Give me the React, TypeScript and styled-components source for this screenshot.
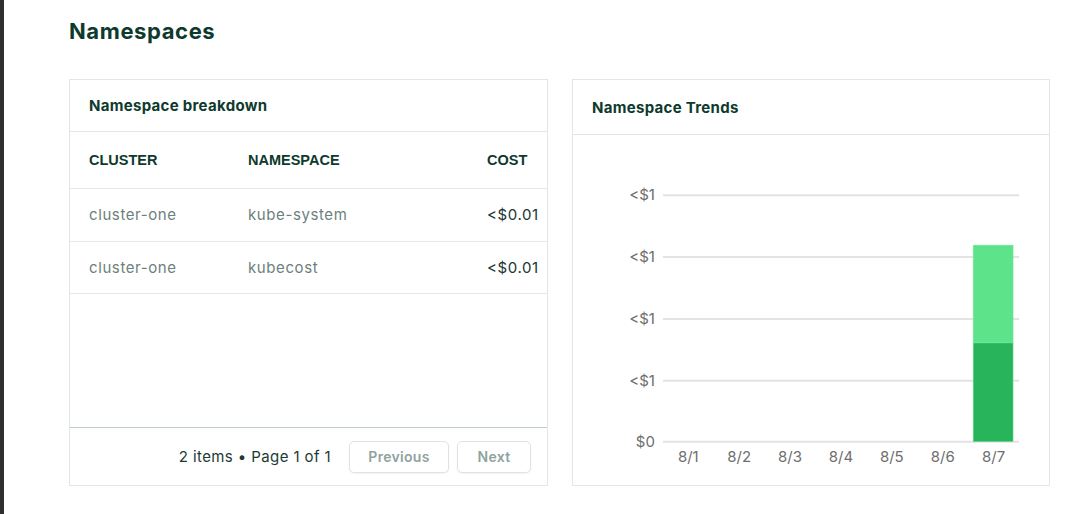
import React from "react";
import styled, { createGlobalStyle } from "styled-components";

const Global = createGlobalStyle`
  html, body { margin: 0; padding: 0; background: #ffffff; }
  body { font-family: Inter, "Open Sans", sans-serif; color: #0f3b30; }
  * { box-sizing: border-box; }
`;

const Page = styled.div`
  display: flex;
  min-height: 514px;
`;

const SideEdge = styled.div`
  width: 4px;
  flex: none;
  background: #2f2f2f;
`;

const Main = styled.main`
  flex: 1;
  padding: 16px 15px 0 65px;
`;

const Title = styled.h1`
  margin: 0 0 33px;
  font-size: 22px;
  line-height: 30px;
  font-weight: 700;
  letter-spacing: 0.6px;
  color: #0e3a2e;
`;

const Grid = styled.div`
  display: grid;
  grid-template-columns: 479px 478px;
  gap: 24px;
`;

const Card = styled.section`
  height: 407px;
  border: 1px solid #e4e6e6;
  background: #fff;
  display: flex;
  flex-direction: column;
  overflow: hidden;
`;

const CardHeader = styled.div<{ $h: number }>`
  height: ${(p) => p.$h}px;
  flex: none;
  display: flex;
  align-items: center;
  padding: 0 19px;
  border-bottom: 1px solid #e4e6e6;
  font-size: 15px;
  font-weight: 700;
  letter-spacing: 0.3px;
  color: #0e3a2e;
`;

const Table = styled.div`
  flex: 1;
  display: flex;
  flex-direction: column;
`;

const Row = styled.div<{ $head?: boolean }>`
  display: grid;
  grid-template-columns: 159px 239px 1fr;
  align-items: center;
  height: ${(p) => (p.$head ? 57 : 52.5)}px;
  flex: none;
  padding-left: 19px;
  border-bottom: 1px solid #e6e8e8;
`;

const HeadCell = styled.div`
  font-family: "Liberation Sans", Arial, sans-serif;
  font-weight: 700;
  font-size: 14.5px;
  color: #0e3a2e;
`;

const Cell = styled.div<{ $dark?: boolean }>`
  font-size: 15px;
  letter-spacing: 0.6px;
  color: ${(p) => (p.$dark ? "#1b3530" : "#6d7f7c")};
  white-space: nowrap;
`;

const Spacer = styled.div`
  flex: 1;
`;

const Footer = styled.div`
  height: 58px;
  flex: none;
  border-top: 1px solid #bccfcb;
  display: flex;
  align-items: center;
  justify-content: flex-end;
  padding: 0 16px 0 20px;
  gap: 8px;
`;

const PageInfo = styled.span`
  font-size: 15px;
  letter-spacing: 0.4px;
  color: #1b3a33;
  margin-right: 10px;
`;

const PagerButton = styled.button<{ $w: number }>`
  width: ${(p) => p.$w}px;
  height: 32px;
  border: 1px solid #dfe4e3;
  border-radius: 5px;
  background: #fff;
  box-shadow: 0 1px 2px rgba(0, 0, 0, 0.05);
  font-family: Inter, sans-serif;
  font-size: 14px;
  font-weight: 600;
  letter-spacing: 0.3px;
  color: #8fa39f;
  cursor: default;
`;

const ChartBody = styled.div`
  flex: 1;
  display: flex;
`;

const rows = [
  { cluster: "cluster-one", ns: "kube-system", cost: "<$0.01" },
  { cluster: "cluster-one", ns: "kubecost", cost: "<$0.01" },
];

const gridY = [60, 122, 184, 246, 307];
const yLabels = ["<$1", "<$1", "<$1", "<$1", "$0"];
const days = ["8/1", "8/2", "8/3", "8/4", "8/5", "8/6", "8/7"];

function TrendChart() {
  return (
    <svg width="477" height="350" viewBox="0 0 477 350">
      {gridY.map((y, i) => (
        <g key={i}>
          <line x1={90} x2={447} y1={y} y2={y} stroke="#e3e3e3" strokeWidth={2} />
          <text
            x={82}
            y={y + 5}
            textAnchor="end"
            fontFamily="Inter, sans-serif"
            fontSize={15}
            fill="#6e6e6e"
          >
            {yLabels[i]}
          </text>
        </g>
      ))}
      <rect x={401} y={110} width={40} height={98} fill="#5de48b" stroke="#7be9a1" strokeWidth={0.5} />
      <rect x={401} y={208} width={40} height={99} fill="#28b45a" stroke="#7be9a1" strokeWidth={0.5} />
      {days.map((d, i) => (
        <text
          key={d}
          x={115.5 + i * 51}
          y={327}
          textAnchor="middle"
          fontFamily="Inter, sans-serif"
          fontSize={15}
          fill="#6e6e6e"
        >
          {d}
        </text>
      ))}
    </svg>
  );
}

export default function App() {
  return (
    <>
      <Global />
      <Page>
        <SideEdge />
        <Main>
          <Title>Namespaces</Title>
          <Grid>
            <Card>
              <CardHeader $h={52}>Namespace breakdown</CardHeader>
              <Table>
                <Row $head>
                  <HeadCell>CLUSTER</HeadCell>
                  <HeadCell>NAMESPACE</HeadCell>
                  <HeadCell>COST</HeadCell>
                </Row>
                {rows.map((r) => (
                  <Row key={r.ns}>
                    <Cell>{r.cluster}</Cell>
                    <Cell>{r.ns}</Cell>
                    <Cell $dark>{r.cost}</Cell>
                  </Row>
                ))}
                <Spacer />
              </Table>
              <Footer>
                <PageInfo>2 items • Page 1 of 1</PageInfo>
                <PagerButton $w={100}>Previous</PagerButton>
                <PagerButton $w={74}>Next</PagerButton>
              </Footer>
            </Card>
            <Card>
              <CardHeader $h={55}>Namespace Trends</CardHeader>
              <ChartBody>
                <TrendChart />
              </ChartBody>
            </Card>
          </Grid>
        </Main>
      </Page>
    </>
  );
}
